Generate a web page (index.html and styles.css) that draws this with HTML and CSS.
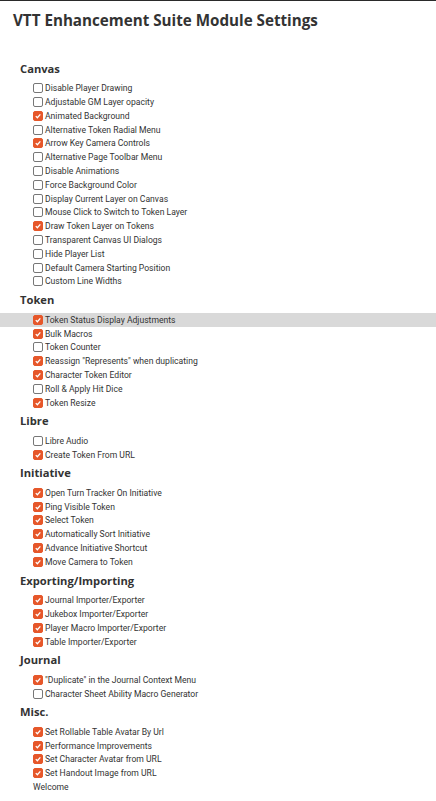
FILE: index.html
```html
<!DOCTYPE html>
<html>
<head>
<meta charset="utf-8">
<link rel="stylesheet" href="styles.css">
</head>
<body>
<div class="topline"></div>
<h1 class="title">VTT Enhancement Suite Module Settings</h1>

<section class="group">
  <h2 class="group-title">Canvas</h2>
  <ul class="opts">
    <li class="opt"><span class="box"></span><span class="lbl">Disable Player Drawing</span></li>
    <li class="opt"><span class="box"></span><span class="lbl">Adjustable GM Layer opacity</span></li>
    <li class="opt"><span class="box on"><svg viewBox="0 0 10 10"><path d="M2.2 5.2 L4.2 7.2 L7.9 2.9"/></svg></span><span class="lbl">Animated Background</span></li>
    <li class="opt"><span class="box"></span><span class="lbl">Alternative Token Radial Menu</span></li>
    <li class="opt"><span class="box on"><svg viewBox="0 0 10 10"><path d="M2.2 5.2 L4.2 7.2 L7.9 2.9"/></svg></span><span class="lbl">Arrow Key Camera Controls</span></li>
    <li class="opt"><span class="box"></span><span class="lbl">Alternative Page Toolbar Menu</span></li>
    <li class="opt"><span class="box"></span><span class="lbl">Disable Animations</span></li>
    <li class="opt"><span class="box"></span><span class="lbl">Force Background Color</span></li>
    <li class="opt"><span class="box"></span><span class="lbl">Display Current Layer on Canvas</span></li>
    <li class="opt"><span class="box"></span><span class="lbl">Mouse Click to Switch to Token Layer</span></li>
    <li class="opt"><span class="box on"><svg viewBox="0 0 10 10"><path d="M2.2 5.2 L4.2 7.2 L7.9 2.9"/></svg></span><span class="lbl">Draw Token Layer on Tokens</span></li>
    <li class="opt"><span class="box"></span><span class="lbl">Transparent Canvas UI Dialogs</span></li>
    <li class="opt"><span class="box"></span><span class="lbl">Hide Player List</span></li>
    <li class="opt"><span class="box"></span><span class="lbl">Default Camera Starting Position</span></li>
    <li class="opt"><span class="box"></span><span class="lbl">Custom Line Widths</span></li>
  </ul>
</section>

<section class="group">
  <h2 class="group-title">Token</h2>
  <ul class="opts">
    <li class="opt hover"><span class="box on"><svg viewBox="0 0 10 10"><path d="M2.2 5.2 L4.2 7.2 L7.9 2.9"/></svg></span><span class="lbl">Token Status Display Adjustments</span></li>
    <li class="opt"><span class="box on"><svg viewBox="0 0 10 10"><path d="M2.2 5.2 L4.2 7.2 L7.9 2.9"/></svg></span><span class="lbl">Bulk Macros</span></li>
    <li class="opt"><span class="box"></span><span class="lbl">Token Counter</span></li>
    <li class="opt"><span class="box on"><svg viewBox="0 0 10 10"><path d="M2.2 5.2 L4.2 7.2 L7.9 2.9"/></svg></span><span class="lbl">Reassign "Represents" when duplicating</span></li>
    <li class="opt"><span class="box on"><svg viewBox="0 0 10 10"><path d="M2.2 5.2 L4.2 7.2 L7.9 2.9"/></svg></span><span class="lbl">Character Token Editor</span></li>
    <li class="opt"><span class="box"></span><span class="lbl">Roll &amp; Apply Hit Dice</span></li>
    <li class="opt"><span class="box on"><svg viewBox="0 0 10 10"><path d="M2.2 5.2 L4.2 7.2 L7.9 2.9"/></svg></span><span class="lbl">Token Resize</span></li>
  </ul>
</section>

<section class="group">
  <h2 class="group-title">Libre</h2>
  <ul class="opts">
    <li class="opt"><span class="box"></span><span class="lbl">Libre Audio</span></li>
    <li class="opt"><span class="box on"><svg viewBox="0 0 10 10"><path d="M2.2 5.2 L4.2 7.2 L7.9 2.9"/></svg></span><span class="lbl">Create Token From URL</span></li>
  </ul>
</section>

<section class="group">
  <h2 class="group-title">Initiative</h2>
  <ul class="opts">
    <li class="opt"><span class="box on"><svg viewBox="0 0 10 10"><path d="M2.2 5.2 L4.2 7.2 L7.9 2.9"/></svg></span><span class="lbl">Open Turn Tracker On Initiative</span></li>
    <li class="opt"><span class="box on"><svg viewBox="0 0 10 10"><path d="M2.2 5.2 L4.2 7.2 L7.9 2.9"/></svg></span><span class="lbl">Ping Visible Token</span></li>
    <li class="opt"><span class="box on"><svg viewBox="0 0 10 10"><path d="M2.2 5.2 L4.2 7.2 L7.9 2.9"/></svg></span><span class="lbl">Select Token</span></li>
    <li class="opt"><span class="box on"><svg viewBox="0 0 10 10"><path d="M2.2 5.2 L4.2 7.2 L7.9 2.9"/></svg></span><span class="lbl">Automatically Sort Initiative</span></li>
    <li class="opt"><span class="box on"><svg viewBox="0 0 10 10"><path d="M2.2 5.2 L4.2 7.2 L7.9 2.9"/></svg></span><span class="lbl">Advance Initiative Shortcut</span></li>
    <li class="opt"><span class="box on"><svg viewBox="0 0 10 10"><path d="M2.2 5.2 L4.2 7.2 L7.9 2.9"/></svg></span><span class="lbl">Move Camera to Token</span></li>
  </ul>
</section>

<section class="group">
  <h2 class="group-title">Exporting/Importing</h2>
  <ul class="opts">
    <li class="opt"><span class="box on"><svg viewBox="0 0 10 10"><path d="M2.2 5.2 L4.2 7.2 L7.9 2.9"/></svg></span><span class="lbl">Journal Importer/Exporter</span></li>
    <li class="opt"><span class="box on"><svg viewBox="0 0 10 10"><path d="M2.2 5.2 L4.2 7.2 L7.9 2.9"/></svg></span><span class="lbl">Jukebox Importer/Exporter</span></li>
    <li class="opt"><span class="box on"><svg viewBox="0 0 10 10"><path d="M2.2 5.2 L4.2 7.2 L7.9 2.9"/></svg></span><span class="lbl">Player Macro Importer/Exporter</span></li>
    <li class="opt"><span class="box on"><svg viewBox="0 0 10 10"><path d="M2.2 5.2 L4.2 7.2 L7.9 2.9"/></svg></span><span class="lbl">Table Importer/Exporter</span></li>
  </ul>
</section>

<section class="group">
  <h2 class="group-title">Journal</h2>
  <ul class="opts">
    <li class="opt"><span class="box on"><svg viewBox="0 0 10 10"><path d="M2.2 5.2 L4.2 7.2 L7.9 2.9"/></svg></span><span class="lbl">"Duplicate" in the Journal Context Menu</span></li>
    <li class="opt"><span class="box"></span><span class="lbl">Character Sheet Ability Macro Generator</span></li>
  </ul>
</section>

<section class="group">
  <h2 class="group-title">Misc.</h2>
  <ul class="opts">
    <li class="opt"><span class="box on"><svg viewBox="0 0 10 10"><path d="M2.2 5.2 L4.2 7.2 L7.9 2.9"/></svg></span><span class="lbl">Set Rollable Table Avatar By Url</span></li>
    <li class="opt"><span class="box on"><svg viewBox="0 0 10 10"><path d="M2.2 5.2 L4.2 7.2 L7.9 2.9"/></svg></span><span class="lbl">Performance Improvements</span></li>
    <li class="opt"><span class="box on"><svg viewBox="0 0 10 10"><path d="M2.2 5.2 L4.2 7.2 L7.9 2.9"/></svg></span><span class="lbl">Set Character Avatar from URL</span></li>
    <li class="opt"><span class="box on"><svg viewBox="0 0 10 10"><path d="M2.2 5.2 L4.2 7.2 L7.9 2.9"/></svg></span><span class="lbl">Set Handout Image from URL</span></li>
  </ul>
  <div class="welcome">Welcome</div>
</section>
</body>
</html>
```
FILE: styles.css
```css
html, body {
  margin: 0;
  padding: 0;
  background: #ffffff;
}
body {
  font-family: Roboto, "Liberation Sans", Arial, sans-serif;
  color: #333333;
  overflow: hidden;
}
.topline {
  height: 1px;
  background: #2a2a2a;
}
.title {
  margin: 8px 0 0 13px;
  font-family: "Open Sans", "Noto Sans", sans-serif;
  font-weight: 700;
  font-size: 15.2px;
  line-height: 22px;
  color: #333333;
}
.group {
  margin: 0;
}
.group:first-of-type {
  margin-top: 28.8px;
}
.group-title {
  margin: 0 0 0 20px;
  font-family: "Open Sans", "Noto Sans", sans-serif;
  font-weight: 700;
  font-size: 11.2px;
  line-height: 18px;
  height: 18px;
  color: #333333;
}
.opts {
  list-style: none;
  margin: 3.6px 0 2.9px 0;
  padding: 0;
}
.opt {
  display: flex;
  align-items: center;
  gap: 2px;
  height: 13.8px;
  padding-left: 33px;
  font-size: 8.6px;
  color: #333333;
}
.opt.hover {
  background: #d9d9d9;
}
.box {
  display: inline-flex;
  width: 8px;
  height: 8px;
  border: 1px solid #777777;
  border-radius: 2px;
  background: #ffffff;
  flex: none;
}
.box.on {
  background: #e6572a;
  border-color: #e6572a;
}
.box svg {
  width: 8px;
  height: 8px;
  fill: none;
  stroke: #ffffff;
  stroke-width: 1.6;
}
.lbl {
  white-space: nowrap;
}
.welcome {
  display: flex;
  align-items: center;
  height: 13.8px;
  margin: -2.9px 0 0 33px;
  font-size: 8.6px;
}
```
